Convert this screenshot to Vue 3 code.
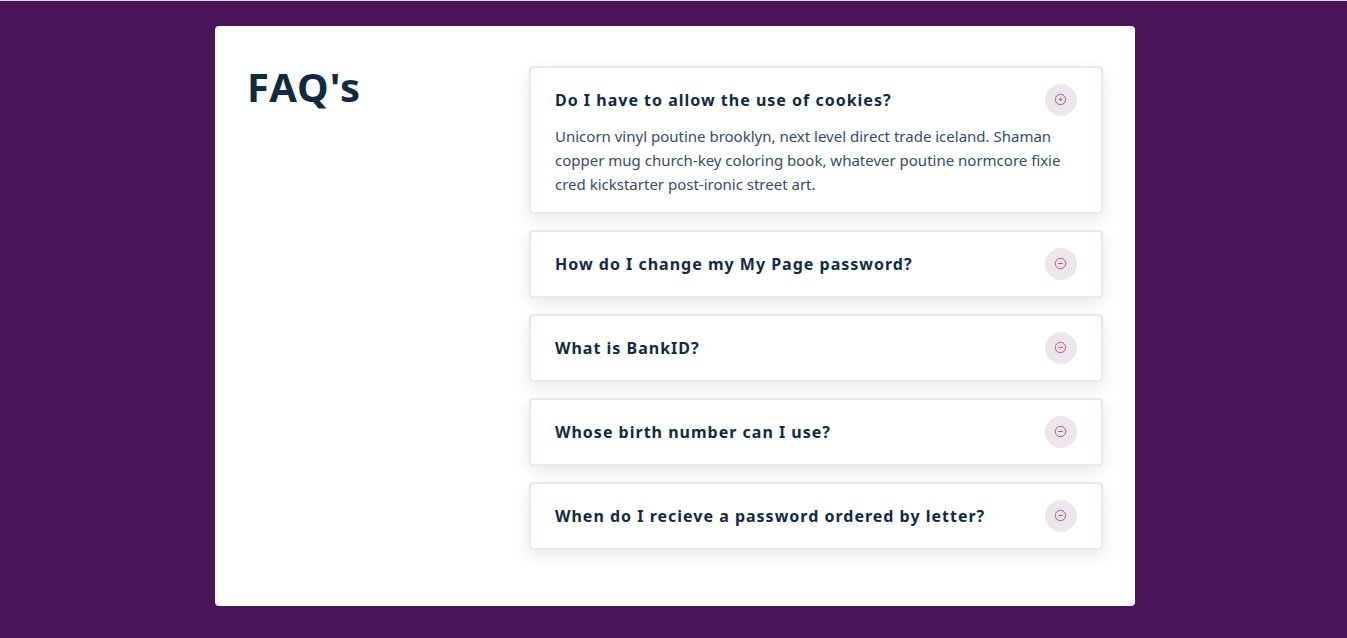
<script setup>
import { ref } from 'vue'

const questions = ref([
  {
    id: 1,
    title: 'Do I have to allow the use of cookies?',
    info: 'Unicorn vinyl poutine brooklyn, next level direct trade iceland. Shaman copper mug church-key coloring book, whatever poutine normcore fixie cred kickstarter post-ironic street art.',
    open: true
  },
  { id: 2, title: 'How do I change my My Page password?', info: '', open: false },
  { id: 3, title: 'What is BankID?', info: '', open: false },
  { id: 4, title: 'Whose birth number can I use?', info: '', open: false },
  { id: 5, title: 'When do I recieve a password ordered by letter?', info: '', open: false }
])
</script>

<template>
  <main class="page">
    <div class="container">
      <h1 class="heading">FAQ's</h1>
      <section class="list">
        <article v-for="q in questions" :key="q.id" class="question">
          <header class="row">
            <h2 :id="`title-${q.id}`" class="title">{{ q.title }}</h2>
            <button
              type="button"
              class="toggle"
              :aria-expanded="q.open"
              :aria-labelledby="`title-${q.id}`"
              @click="q.open = !q.open"
            >
              <svg class="icon" viewBox="0 0 12 12" aria-hidden="true">
                <circle cx="5.5" cy="5.5" r="5.2" />
                <path v-if="q.open" d="M3.8 5.5h3.4M5.5 3.8v3.4" />
                <path v-else d="M3.2 5.5h4.6" />
              </svg>
            </button>
          </header>
          <p v-if="q.open && q.info" class="info">{{ q.info }}</p>
        </article>
      </section>
    </div>
  </main>
</template>

<style>
body {
  background: #4c1459;
}
</style>

<style scoped>
.page {
  box-sizing: border-box;
  min-height: 100vh;
  padding: 25px 21px 32px 24px;
  border-top: 1px solid #d3dce4;
  background: #4c1459;
  font-family: "Segoe UI", "Noto Sans", "Open Sans", sans-serif;
  color: #102a42;
}

.container {
  box-sizing: border-box;
  display: grid;
  grid-template-columns: 250px minmax(0, 1fr);
  column-gap: 32px;
  max-width: 920px;
  margin: 0 auto;
  padding: 40px 32px 56px;
  border-radius: 4px;
  background: #fff;
}

.heading {
  margin: 0;
  font-size: 40px;
  line-height: 42px;
  font-weight: 700;
  letter-spacing: 1px;
}

.list {
  display: grid;
  row-gap: 16px;
}

.question {
  padding: 16px 24px;
  border: 2px solid #eae6eb;
  border-radius: 4px;
  background: #fff;
  box-shadow: 0 5px 15px rgba(0, 0, 0, 0.1);
}

.row {
  display: flex;
  align-items: center;
  justify-content: space-between;
}

.title {
  margin: 0;
  font-size: 16px;
  line-height: 24px;
  font-weight: 700;
  letter-spacing: 1px;
}

.toggle {
  display: flex;
  flex-shrink: 0;
  align-items: center;
  justify-content: center;
  width: 32px;
  height: 32px;
  padding: 0;
  border: 0;
  border-radius: 50%;
  background: #eae6eb;
  color: #b4345f;
  cursor: pointer;
}

.icon {
  width: 12px;
  height: 12px;
  overflow: visible;
  fill: none;
  stroke: currentColor;
  stroke-width: 0.8;
}

.info {
  margin: 8px 0 0;
  font-size: 15px;
  line-height: 24px;
  color: #324d67;
}
</style>
